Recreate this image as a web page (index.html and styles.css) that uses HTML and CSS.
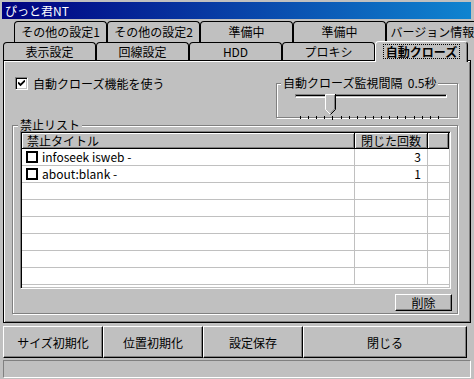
FILE: index.html
```
<!DOCTYPE html>
<html>
<head>
    <title>ぴっと君NT</title>
    <link rel="stylesheet" href="styles.css">
</head>
<body>
    <div class="window">
        <div class="titlebar">ぴっと君NT</div>

        <!-- タブ (後列) -->
        <div class="tabs tabs-back">
            <div class="tab">その他の設定1</div>
            <div class="tab">その他の設定2</div>
            <div class="tab">準備中</div>
            <div class="tab">準備中</div>
            <div class="tab">バージョン情報</div>
        </div>

        <!-- タブ (前列) -->
        <div class="tabs tabs-front">
            <div class="tab">表示設定</div>
            <div class="tab">回線設定</div>
            <div class="tab">HDD</div>
            <div class="tab">プロキシ</div>
            <div class="tab selected"><span class="focus">自動クローズ</span></div>
        </div>

        <div class="panel">
            <div class="top-row">
                <label class="check">
                    <span class="checkbox">
                        <svg width="7" height="7" viewBox="0 0 7 7"><path d="M0 2.5 L2.5 5 L7 0.5" stroke="#000" stroke-width="1.8" fill="none"/></svg>
                    </span>
                    自動クローズ機能を使う
                </label>

                <div class="group slider-group">
                    <span class="legend">自動クローズ監視間隔&nbsp; 0.5秒</span>
                    <div class="slider">
                        <div class="track"></div>
                        <svg class="thumb" width="11" height="21" viewBox="0 0 11 21">
                            <polygon points="0,0 11,0 11,15 5.5,20.5 0,15" fill="#c0c0c0"/>
                            <polyline points="0.5,15.5 0.5,0.5 10,0.5" stroke="#fff" fill="none"/>
                            <polyline points="0.5,15.5 5,20" stroke="#fff" fill="none"/>
                            <polyline points="10.5,0 10.5,15.5 5.5,20.5" stroke="#000" fill="none"/>
                            <polyline points="9.5,1 9.5,15 5.5,19" stroke="#808080" fill="none"/>
                        </svg>
                    </div>
                    <div class="ticks">
                        <span></span><span></span><span></span><span></span><span class="long"></span><span></span>
                        <span></span><span></span><span></span><span></span><span></span><span></span>
                        <span></span><span></span><span></span><span></span><span></span><span></span>
                    </div>
                </div>
            </div>

            <div class="group list-group">
                <span class="legend">禁止リスト</span>
                <div class="listview">
                    <div class="lv-row lv-head">
                        <div class="cell col-title">禁止タイトル</div>
                        <div class="cell col-count">閉じた回数</div>
                        <div class="cell col-rest"></div>
                    </div>
                    <div class="lv-row">
                        <div class="cell col-title"><span class="row-box"></span>infoseek isweb -</div>
                        <div class="cell col-count">3</div>
                        <div class="cell col-rest"></div>
                    </div>
                    <div class="lv-row">
                        <div class="cell col-title"><span class="row-box"></span>about:blank -</div>
                        <div class="cell col-count">1</div>
                        <div class="cell col-rest"></div>
                    </div>
                    <div class="lv-row"><div class="cell col-title"></div><div class="cell col-count"></div><div class="cell col-rest"></div></div>
                    <div class="lv-row"><div class="cell col-title"></div><div class="cell col-count"></div><div class="cell col-rest"></div></div>
                    <div class="lv-row"><div class="cell col-title"></div><div class="cell col-count"></div><div class="cell col-rest"></div></div>
                    <div class="lv-row"><div class="cell col-title"></div><div class="cell col-count"></div><div class="cell col-rest"></div></div>
                    <div class="lv-row"><div class="cell col-title"></div><div class="cell col-count"></div><div class="cell col-rest"></div></div>
                    <div class="lv-row"><div class="cell col-title"></div><div class="cell col-count"></div><div class="cell col-rest"></div></div>
                </div>
                <button class="btn btn-delete">削除</button>
            </div>
        </div>

        <div class="buttons">
            <button class="btn btn-big">サイズ初期化</button>
            <button class="btn btn-big">位置初期化</button>
            <button class="btn btn-big">設定保存</button>
            <button class="btn btn-big btn-close">閉じる</button>
        </div>

        <div class="statusbar"></div>
    </div>
</body>
</html>
```

FILE: styles.css
```
body {
    margin: 0;
    background-color: #c0c0c0;
    font-family: "Noto Sans CJK JP", "Noto Sans", sans-serif;
    font-size: 12px;
    color: #000;
}
.window {
    width: 474px;
    height: 379px;
    display: flex;
    flex-direction: column;
    overflow: hidden;
}
.titlebar {
    margin: 2px 3px 0 2px;
    height: 17px;
    line-height: 17px;
    padding-left: 3px;
    color: white;
    background: linear-gradient(to right, #000080, #1084d0);
}

/* タブ */
.tabs {
    display: flex;
    align-items: flex-start;
}
.tabs-back {
    margin-top: 2px;
    height: 21px;
    padding-left: 14px;
}
.tabs-front {
    height: 18px;
    padding-left: 3px;
}
.tab {
    flex: none;
    width: 93px;
    box-sizing: border-box;
    border: 1px solid #000;
    border-bottom: none;
    border-radius: 4px 4px 0 0;
    text-align: center;
    background-color: #c0c0c0;
}
.tabs-back .tab {
    height: 21px;
    line-height: 19px;
}
.tabs-front .tab {
    height: 18px;
    line-height: 17px;
}
.tabs-front .tab.selected {
    position: relative;
    z-index: 1;
    margin-top: -1px;
    height: 21px;
    border-color: #fff;
    border-right-color: #000;
    box-shadow: inset -1px 0 0 #808080;
    font-weight: bold;
    line-height: 19px;
}
.focus {
    display: inline-block;
    line-height: 13px;
    padding: 0 2px;
    outline: 1px dotted #000;
}

/* パネル */
.panel {
    margin-left: 3px;
    width: 468px;
    height: 263px;
    box-sizing: border-box;
    border: 1px solid #000;
    box-shadow: inset 1px 1px 0 #fff, inset -1px -1px 0 #808080;
}
.top-row {
    display: flex;
    justify-content: space-between;
    align-items: flex-start;
    padding: 16px 12px 0 11px;
}
.check {
    display: flex;
    align-items: center;
    gap: 5px;
    line-height: 13px;
}
.checkbox {
    width: 13px;
    height: 13px;
    box-sizing: border-box;
    display: flex;
    align-items: center;
    justify-content: center;
    background-color: white;
    border: 1px solid;
    border-color: #808080 #fff #fff #808080;
    box-shadow: inset 1px 1px 0 #000, inset -1px -1px 0 #c0c0c0;
}
.group {
    position: relative;
    box-sizing: border-box;
    border: 1px solid #808080;
    box-shadow: inset 1px 1px 0 #fff, 1px 1px 0 #fff;
}
.legend {
    position: absolute;
    top: -8px;
    left: 5px;
    padding: 0 2px;
    line-height: 13px;
    background-color: #c0c0c0;
    white-space: nowrap;
}
.slider-group {
    margin-top: 6px;
    width: 182px;
    height: 35px;
    padding: 4px 10px 0 18px;
}
.slider-group .legend {
    left: 4px;
}
.slider {
    position: relative;
    height: 20px;
}
.track {
    margin-top: 6px;
    height: 4px;
    box-sizing: border-box;
    border: 1px solid;
    border-color: #808080 #fff #fff #808080;
    box-shadow: inset 0 1px 0 #000;
}
.thumb {
    position: absolute;
    top: 0;
    left: 30px;
}
.ticks {
    margin: 2px 8px 0 5px;
    display: flex;
    justify-content: space-between;
    align-items: flex-start;
}
.ticks span {
    width: 1px;
    height: 3px;
    background-color: #000;
}
.ticks span.long {
    height: 4px;
}

/* 禁止リスト */
.list-group {
    margin: 7px 0 0 8px;
    width: 446px;
    height: 189px;
    padding: 5px 6px 0 7px;
    display: flex;
    flex-direction: column;
}
.listview {
    height: 158px;
    box-sizing: border-box;
    background-color: white;
    border: 1px solid;
    border-color: #808080 #fff #fff #808080;
    box-shadow: inset 1px 1px 0 #000, inset -1px -1px 0 #c0c0c0;
    padding: 1px;
    overflow: hidden;
}
.lv-row {
    display: flex;
    height: 17px;
    box-sizing: border-box;
    border-bottom: 1px solid #c0c0c0;
}
.cell {
    box-sizing: border-box;
    border-right: 1px solid #c0c0c0;
    display: flex;
    align-items: center;
    white-space: nowrap;
    line-height: 14px;
}
.col-title {
    width: 333px;
    padding-left: 4px;
}
.col-count {
    width: 73px;
    justify-content: flex-end;
    padding-right: 6px;
}
.col-rest {
    flex: 1;
    border-right: none;
}
.lv-head {
    height: 16px;
    border-bottom: none;
}
.lv-head .cell {
    background-color: #c0c0c0;
    border-right: 1px solid #000;
    border-bottom: 1px solid #000;
    box-shadow: inset 1px 1px 0 #fff, inset -1px -1px 0 #808080;
    padding-top: 1px;
}
.lv-head .col-title {
    padding-left: 5px;
}
.row-box {
    width: 12px;
    height: 12px;
    box-sizing: border-box;
    border: 2px solid #000;
    background-color: white;
    margin-right: 4px;
}
.btn {
    font: inherit;
    color: #000;
    background-color: #c0c0c0;
    box-sizing: border-box;
    padding: 0;
    border: 1px solid;
    border-color: #fff #000 #000 #fff;
    box-shadow: inset -1px -1px 0 #808080;
}
.btn-delete {
    align-self: flex-end;
    margin: 5px -1px 0 0;
    width: 57px;
    height: 17px;
    line-height: 13px;
}

/* 下部ボタン */
.buttons {
    display: flex;
    margin: 3px 0 0 3px;
}
.btn-big {
    width: 100px;
    height: 32px;
}
.btn-close {
    width: 164px;
}
.statusbar {
    margin: 2px 0 0 3px;
    width: 468px;
    height: 18px;
    box-sizing: border-box;
    border: 1px solid;
    border-color: #808080 #fff #fff #808080;
}
```
